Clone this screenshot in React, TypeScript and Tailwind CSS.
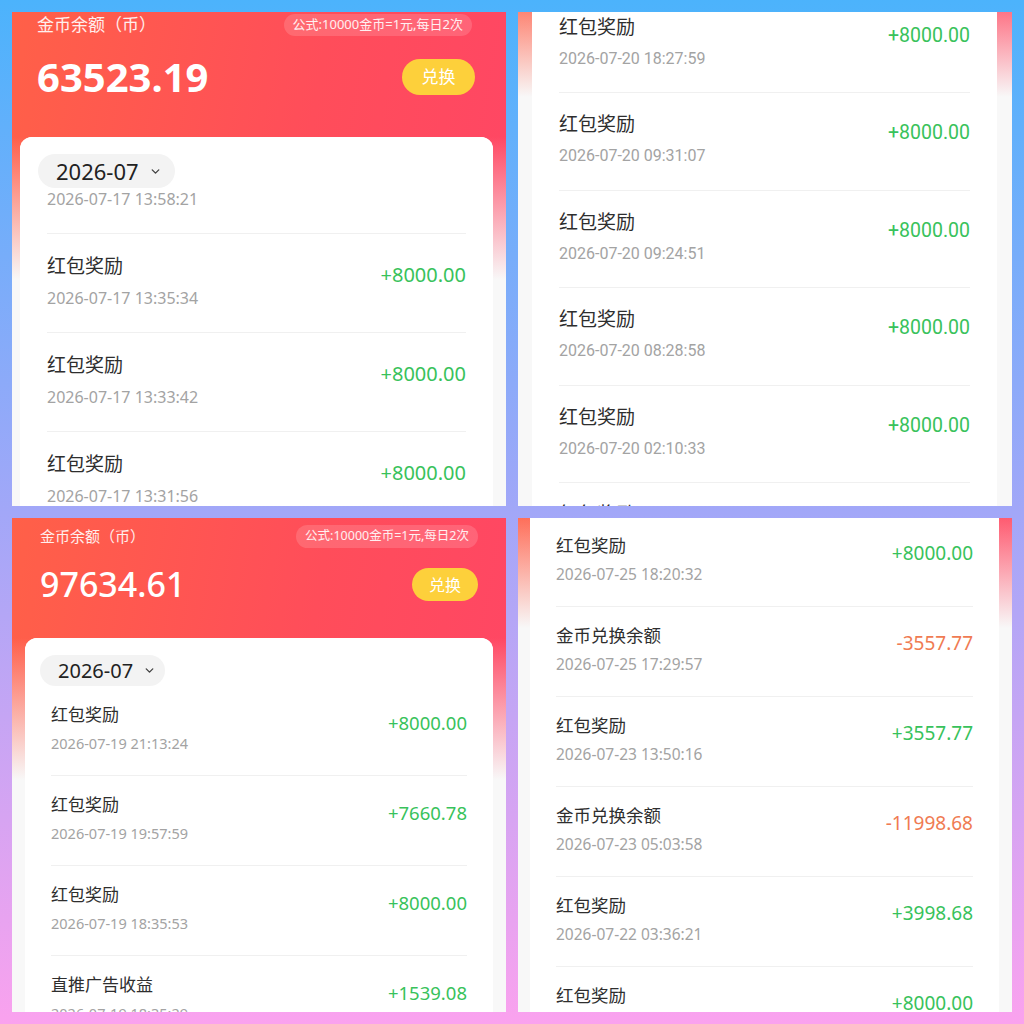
import React from "react";
import { ChevronDown } from "lucide-react";

// coin ledger screenshots, four phone captures in a 2x2 collage

type Item = { title: string; time: string; amount: string };

interface RowSize {
    row: string;
    title: string;
    time: string;
    amount: string;
}

interface HeaderSize {
    wrap: string;
    top: string;
    label: string;
    pill: string;
    mid: string;
    balance: string;
    btn: string;
}

interface PanelConfig {
    bg: string;
    font: string;
    header?: { balance: string; size: HeaderSize };
    card: string;
    band?: string;
    monthPill?: string;
    list: string;
    row: RowSize;
    items: Item[];
}

const RED = "红包奖励";
const SWAP = "金币兑换余额";

const panels: PanelConfig[] = [
    {
        bg: "bg-[linear-gradient(180deg,rgba(248,248,248,0)_125px,#f8f8f8_268px),linear-gradient(100deg,#ff6048_0%,#ff4d5a_55%,#ff4566_100%)]",
        font: "font-[family-name:'Noto_Sans','Noto_Sans_CJK_SC',sans-serif]",
        header: {
            balance: "63523.19",
            size: {
                wrap: "pl-[25px] pr-[31px]",
                top: "mt-[2px] h-[22px]",
                label: "text-[17px]",
                pill: "mr-[3px] h-[22px] px-[9px] text-[13px]",
                mid: "mt-[23px] h-[36px]",
                balance: "text-[40px] font-bold leading-[36px]",
                btn: "h-[36px] w-[73px] text-[17px]",
            },
        },
        card: "ml-[8px] mr-[13px] mt-[42px] rounded-t-[12px]",
        band: "h-[52px]",
        monthPill: "ml-[18px] mt-[17px] h-[34px] w-[137px] pl-[18px] text-[22px]",
        list: "mx-[27px] mt-[-3px]",
        row: {
            row: "h-[99px] pt-[20px]",
            title: "text-[19px] leading-[24px]",
            time: "mt-[8px] text-[16px] leading-[24px]",
            amount: "mt-[9px] text-[20px] leading-[24px]",
        },
        items: [
            { title: RED, time: "2026-07-17 13:58:21", amount: "+8000.00" },
            { title: RED, time: "2026-07-17 13:35:34", amount: "+8000.00" },
            { title: RED, time: "2026-07-17 13:33:42", amount: "+8000.00" },
            { title: RED, time: "2026-07-17 13:31:56", amount: "+8000.00" },
        ],
    },
    {
        bg: "bg-[linear-gradient(180deg,rgba(248,248,248,0.25)_0px,#f8f8f8_85px),linear-gradient(100deg,#ff6048,#ff4566)]",
        font: "font-[family-name:Roboto,'Noto_Sans_CJK_SC',sans-serif]",
        card: "ml-[14px] mr-[15px]",
        list: "mx-[27px] mt-[-17.5px]",
        row: {
            row: "h-[97.5px] pt-[20px]",
            title: "text-[19px] leading-[24px]",
            time: "mt-[7px] text-[16px] leading-[24px]",
            amount: "mt-[8px] text-[19.5px] leading-[24px]",
        },
        items: [
            { title: RED, time: "2026-07-20 18:27:59", amount: "+8000.00" },
            { title: RED, time: "2026-07-20 09:31:07", amount: "+8000.00" },
            { title: RED, time: "2026-07-20 09:24:51", amount: "+8000.00" },
            { title: RED, time: "2026-07-20 08:28:58", amount: "+8000.00" },
            { title: RED, time: "2026-07-20 02:10:33", amount: "+8000.00" },
            { title: RED, time: "2026-07-20 01:52:10", amount: "+8000.00" },
        ],
    },
    {
        bg: "bg-[linear-gradient(180deg,rgba(248,248,248,0)_120px,#f8f8f8_262px),linear-gradient(100deg,#ff6048_0%,#ff4d5a_55%,#ff4566_100%)]",
        font: "font-[family-name:'Noto_Sans','Noto_Sans_CJK_SC',sans-serif]",
        header: {
            balance: "97634.61",
            size: {
                wrap: "px-[28px]",
                top: "mt-[7px] h-[23px]",
                label: "text-[15px]",
                pill: "h-[23px] px-[9px] text-[12.5px]",
                mid: "mt-[20px] h-[33px]",
                balance: "text-[34px] font-medium leading-[33px]",
                btn: "h-[33px] w-[66px] text-[16px]",
            },
        },
        card: "mx-[13px] mt-[37px] rounded-t-[12px]",
        band: "h-[50px]",
        monthPill: "ml-[15px] mt-[17px] h-[31px] w-[125px] pl-[18px] text-[20px]",
        list: "mx-[26px] mt-[47px]",
        row: {
            row: "h-[90px] pt-[17px]",
            title: "text-[17px] leading-[24px]",
            time: "mt-[4px] text-[14.5px] leading-[24px]",
            amount: "mt-[8px] text-[18.5px] leading-[24px]",
        },
        items: [
            { title: RED, time: "2026-07-19 21:13:24", amount: "+8000.00" },
            { title: RED, time: "2026-07-19 19:57:59", amount: "+7660.78" },
            { title: RED, time: "2026-07-19 18:35:53", amount: "+8000.00" },
            { title: "直推广告收益", time: "2026-07-19 18:35:29", amount: "+1539.08" },
        ],
    },
    {
        bg: "bg-[linear-gradient(180deg,rgba(248,248,248,0.1)_0px,#f8f8f8_110px),linear-gradient(100deg,#ff6048,#ff4566)]",
        font: "font-[family-name:'Noto_Sans','Noto_Sans_CJK_SC',sans-serif]",
        card: "ml-[12px] mr-[13px]",
        list: "mx-[26px] mt-[-2px]",
        row: {
            row: "h-[90px] pt-[16px]",
            title: "text-[17.5px] leading-[24px]",
            time: "mt-[5px] text-[15.5px] leading-[24px]",
            amount: "mt-[8px] text-[19px] leading-[24px]",
        },
        items: [
            { title: RED, time: "2026-07-25 18:20:32", amount: "+8000.00" },
            { title: SWAP, time: "2026-07-25 17:29:57", amount: "-3557.77" },
            { title: RED, time: "2026-07-23 13:50:16", amount: "+3557.77" },
            { title: SWAP, time: "2026-07-23 05:03:58", amount: "-11998.68" },
            { title: RED, time: "2026-07-22 03:36:21", amount: "+3998.68" },
            { title: RED, time: "2026-07-21 22:14:05", amount: "+8000.00" },
        ],
    },
];

function Row({ item, s }: { item: Item; s: RowSize }) {
    const negative = item.amount.startsWith("-");
    return (
        <div className={`flex shrink-0 items-start justify-between border-t border-[#f0f0f0] ${s.row}`}>
            <div className="flex flex-col">
                <span className={`text-[#2e2e2e] ${s.title}`}>{item.title}</span>
                <span className={`text-[#a3a3a3] ${s.time}`}>{item.time}</span>
            </div>
            <span className={`${negative ? "text-[#f07b52]" : "text-[#38c25b]"} ${s.amount}`}>
                {item.amount}
            </span>
        </div>
    );
}

function Header({ balance, size }: { balance: string; size: HeaderSize }) {
    return (
        <div className={`flex flex-col ${size.wrap}`}>
            <div className={`flex items-center justify-between ${size.top}`}>
                <span className={`text-white/90 ${size.label}`}>金币余额（币）</span>
                <span className={`flex items-center rounded-full bg-white/15 text-white/90 ${size.pill}`}>
                    公式:10000金币=1元,每日2次
                </span>
            </div>
            <div className={`flex items-center justify-between ${size.mid}`}>
                <span className={`text-white ${size.balance}`}>{balance}</span>
                <span className={`flex items-center justify-center rounded-full bg-[#fdd03b] text-white ${size.btn}`}>
                    兑换
                </span>
            </div>
        </div>
    );
}

function Panel({ cfg }: { cfg: PanelConfig }) {
    return (
        <div className={`flex h-[494px] w-[494px] flex-col overflow-hidden ${cfg.bg} ${cfg.font}`}>
            {cfg.header && <Header balance={cfg.header.balance} size={cfg.header.size}/>}
            <div className={`relative min-h-0 flex-1 overflow-hidden bg-white ${cfg.card}`}>
                {cfg.band && (
                    // sticky month selector laid over the scrolled list
                    <div className={`absolute inset-x-0 top-0 z-10 flex bg-white ${cfg.band}`}>
                        <div className={`flex items-center gap-[10px] self-start rounded-full bg-[#f3f3f3] text-[#222222] ${cfg.monthPill}`}>
                            <span>2026-07</span>
                            <ChevronDown size={13} strokeWidth={2.6} className="text-[#444444]"/>
                        </div>
                    </div>
                )}
                <div className={`flex flex-col ${cfg.list}`}>
                    {cfg.items.map((item, i) => (
                        <Row key={i} item={item} s={cfg.row}/>
                    ))}
                </div>
            </div>
        </div>
    );
}

export default function App() {
    return (
        <div className="grid h-[1024px] w-[1024px] grid-cols-[494px_494px] grid-rows-[494px_494px] gap-[12px] bg-[linear-gradient(180deg,#4cb3fc_0%,#a2a7f8_50%,#faa2ee_100%)] p-[12px]">
            {panels.map((p, i) => (
                <Panel key={i} cfg={p}/>
            ))}
        </div>
    );
}
